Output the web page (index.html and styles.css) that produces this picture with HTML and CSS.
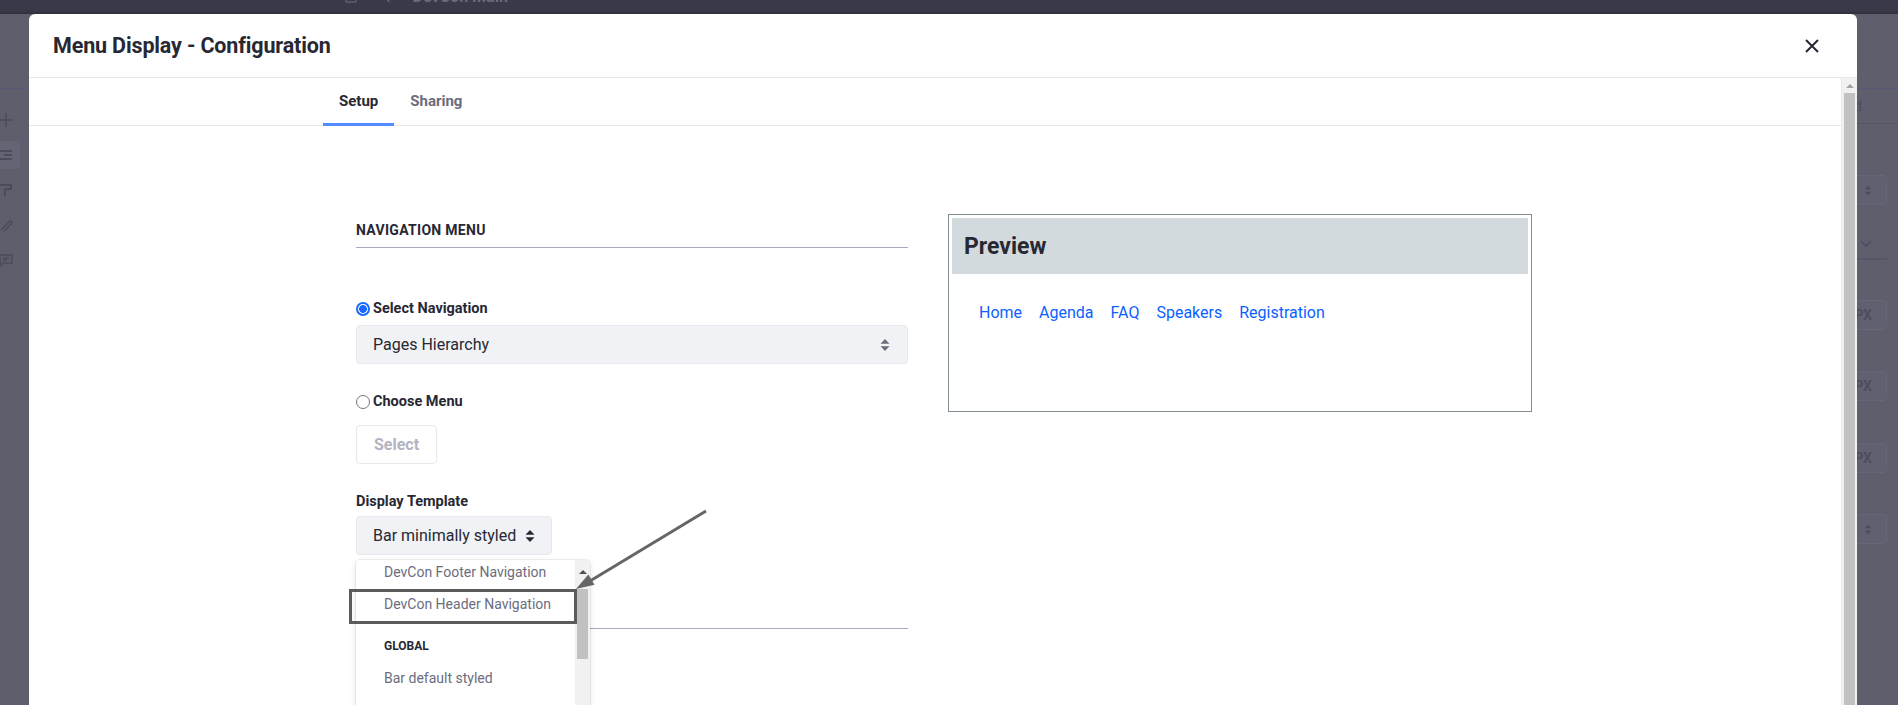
FILE: index.html
```html
<!DOCTYPE html>
<html lang="en">
<head>
<meta charset="utf-8">
<title>Menu Display - Configuration</title>
<link rel="stylesheet" href="styles.css">
</head>
<body>
<div class="topbar">
  <div class="tb-inner">
    <svg class="tb-icon" viewBox="0 0 12 14" width="12" height="14"><rect x="1" y="1" width="10" height="12" rx="1" fill="none" stroke="#5f5f70" stroke-width="1.5"/></svg>
    <span class="tb-back">&lsaquo;</span>
    <span class="tb-title">DevCon Main</span>
  </div>
</div>
<div class="backdrop">
  <aside class="bg-left">
    <div class="bg-head"></div>
    <div class="bg-icons">
      <span class="bg-ico"><svg viewBox="0 0 16 16" width="16" height="16"><path d="M8 1v14M1 8h14" stroke="#4b4b5b" stroke-width="1.5"/></svg></span>
      <span class="bg-ico on"><svg viewBox="0 0 16 16" width="16" height="16"><path d="M2 4h12M6 8h8M2 12h12" stroke="#4b4b5b" stroke-width="2"/></svg></span>
      <span class="bg-ico"><svg viewBox="0 0 16 16" width="16" height="16"><path d="M2 3h11v4H7v7" stroke="#4b4b5b" stroke-width="2" fill="none"/></svg></span>
      <span class="bg-ico"><svg viewBox="0 0 16 16" width="16" height="16"><path d="M3 13L12 4a2 2 0 0 1 2 2l-8 8" stroke="#4b4b5b" stroke-width="1.5" fill="none"/></svg></span>
      <span class="bg-ico"><svg viewBox="0 0 16 16" width="16" height="16"><path d="M2 3h12v8H6l-3 3V11H2z M5 6h6M5 8h4" stroke="#4b4b5b" stroke-width="1.3" fill="none"/></svg></span>
    </div>
  </aside>
  <main class="bg-main"></main>
  <aside class="bg-right">
    <div class="bg-head"></div>
    <div class="bg-tabrow"><span>Advanced</span></div>
    <div class="bg-box b1"><svg viewBox="0 0 10 14" width="8" height="11"><path d="M5 1L9 5.5H1z M1 8.5h8L5 13z" fill="#4b4b5b"/></svg></div>
    <div class="bg-chev"><svg viewBox="0 0 12 8" width="12" height="8"><path d="M1 1l5 5 5-5" stroke="#4b4b5b" stroke-width="1.5" fill="none"/></svg></div>
    <div class="bg-box b2"><b>PX</b></div>
    <div class="bg-box b3"><b>PX</b></div>
    <div class="bg-box b4"><b>PX</b></div>
    <div class="bg-box b5"><svg viewBox="0 0 10 14" width="8" height="11"><path d="M5 1L9 5.5H1z M1 8.5h8L5 13z" fill="#4b4b5b"/></svg></div>
  </aside>
</div>

<div class="modal">
  <header class="modal-header">
    <h1 class="modal-title">Menu Display - Configuration</h1>
    <button class="close" type="button" aria-label="Close">
      <svg viewBox="0 0 14 14" width="14" height="14"><path d="M1 1L13 13M13 1L1 13" stroke="#272833" stroke-width="2" fill="none"/></svg>
    </button>
  </header>
  <div class="modal-body">
    <div class="modal-main">
      <nav class="tabs">
        <a class="tab active">Setup</a>
        <a class="tab">Sharing</a>
      </nav>
      <div class="content">
        <div class="form-col">
          <h3 class="sheet-title">Navigation Menu</h3>
          <label class="radio-row r-first"><span class="radio checked"></span>Select Navigation</label>
          <div class="select wide">
            <span>Pages Hierarchy</span>
            <svg class="caret muted" viewBox="0 0 10 14" width="10" height="14"><path d="M5 1L9.5 5.8H0.5z M0.5 8.2h9L5 13z"/></svg>
          </div>
          <label class="radio-row r-second"><span class="radio"></span>Choose Menu</label>
          <button class="btn-select" type="button">Select</button>
          <div class="field-label">Display Template</div>
          <div class="template-field">
            <div class="select compact">
              <span>Bar minimally styled</span>
              <svg class="caret" viewBox="0 0 10 14" width="10" height="14"><path d="M5 1L9.5 5.8H0.5z M0.5 8.2h9L5 13z"/></svg>
            </div>
            <div class="dropdown">
              <ul class="dd-list">
                <li class="dd-item">DevCon Footer Navigation</li>
                <li class="dd-item">DevCon Header Navigation</li>
                <li class="dd-group">Global</li>
                <li class="dd-item">Bar default styled</li>
                <li class="dd-item">Bar minimally styled (default)</li>
                <li class="dd-item">List menu</li>
              </ul>
              <div class="dd-scroll">
                <span class="dd-up"></span>
                <span class="dd-thumb"></span>
              </div>
            </div>
          </div>
          <div class="separator"></div>
        </div>
        <section class="preview">
          <div class="preview-head"><h2>Preview</h2></div>
          <ul class="preview-nav">
            <li><a>Home</a></li>
            <li><a>Agenda</a></li>
            <li><a>FAQ</a></li>
            <li><a>Speakers</a></li>
            <li><a>Registration</a></li>
          </ul>
        </section>
      </div>
    </div>
    <div class="scrollbar">
      <span class="sb-up"></span>
      <span class="sb-thumb"></span>
    </div>
  </div>
</div>

<div class="note-box"></div>
<svg class="note-arrow" viewBox="0 0 1898 705" width="1898" height="705">
  <line x1="706" y1="511" x2="590" y2="581" stroke="#666666" stroke-width="3"/>
  <polygon points="576,589 594.5,584.8 588.3,574.6" fill="#666666"/>
</svg>
</body>
</html>
```

FILE: styles.css
```css
* { box-sizing: border-box; margin: 0; padding: 0; }
html, body { width: 1898px; height: 705px; overflow: hidden; }
body {
  background: #5e5e6d;
  font-family: Roboto, "Liberation Sans", sans-serif;
  color: #272833;
  position: relative;
}
ul { list-style: none; }
button { font-family: inherit; background: none; border: 0; }

/* ---------- background page (behind backdrop) ---------- */
.topbar {
  height: 14px;
  background: linear-gradient(#3a3a4a 0, #383848 11px, #2e2e3c 14px);
  overflow: hidden;
  padding-left: 345px;
}
.tb-inner {
  display: flex;
  align-items: center;
  height: 20px;
  margin-top: -14px;
  color: #6a6a7c;
}
.tb-icon { margin-right: 27px; }
.tb-back { font-size: 22px; margin-right: 22px; }
.tb-title { font-size: 16px; font-weight: 700; }

.backdrop { display: flex; height: 691px; }
.bg-head { height: 75px; border-bottom: 1px solid #555a7c; }
.bg-left { width: 29px; }
.bg-icons { display: flex; flex-direction: column; gap: 7px; padding-top: 17px; }
.bg-ico {
  width: 28px; height: 28px; margin-left: -8px;
  display: flex; align-items: center; justify-content: center;
  border-radius: 4px;
}
.bg-ico.on { background: #646474; }
.bg-main { flex: 1; }
.bg-right { width: 60px; padding: 0 11px 0 2px; }
.bg-right .bg-head { margin: 0 -11px 0 -2px; }
.bg-tabrow {
  height: 35px;
  margin: 0 -11px 0 -2px;
  border-bottom: 1px solid #565665;
  display: flex; justify-content: flex-end; align-items: center;
  padding-right: 36px;
  font-size: 15px; color: #4f4f60; white-space: nowrap;
}
.bg-box {
  height: 30px;
  border: 1px solid #666676;
  border-radius: 4px;
  background: #606070;
  display: flex; align-items: center; justify-content: flex-end;
  padding-right: 14px;
  color: #4d4d5d; font-size: 14px;
}
.bg-box.b1 { margin-top: 51px; }
.bg-chev {
  height: 31px; margin-top: 24px;
  border-bottom: 2px solid #565667;
  display: flex; align-items: center; justify-content: flex-end; padding-right: 15px;
}
.bg-box.b2 { margin-top: 40px; }
.bg-box.b3 { margin-top: 41px; }
.bg-box.b4 { margin-top: 42px; }
.bg-box.b5 { margin-top: 41px; }

/* ---------- modal ---------- */
.modal {
  position: absolute;
  left: 29px; top: 14px;
  width: 1828px; height: 710px;
  background: #fff;
  border-radius: 6px 6px 0 0;
  display: flex; flex-direction: column;
}
.modal-header {
  height: 64px;
  flex: none;
  border-bottom: 1px solid #e7e7ed;
  display: flex; align-items: center; justify-content: space-between;
  padding: 0 38px 0 24px;
}
.modal-title { font-size: 21.5px; font-weight: 700; color: #272833; letter-spacing: -0.15px; }
.close { width: 14px; height: 14px; display: flex; }

.modal-body { flex: 1; display: flex; min-height: 0; }
.modal-main { flex: 1; min-width: 0; }

.tabs {
  display: flex;
  height: 48px;
  border-bottom: 1px solid #e7e7ed;
  padding-left: 294px;
}
.tab {
  height: 48px;
  margin-bottom: -1px;
  padding: 0 16px 2px;
  display: flex; align-items: center;
  font-size: 15px; font-weight: 700; color: #6b6c7e;
}
.tab.active { color: #272833; box-shadow: inset 0 -3px 0 #528bff; }

.content {
  display: flex; align-items: flex-start;
  padding: 88px 0 0 327px;
}
.form-col { width: 552px; }
.sheet-title {
  font-size: 14px; font-weight: 700; text-transform: uppercase; letter-spacing: 0.3px;
  line-height: 20px;
  padding: 6px 0 7px;
  border-bottom: 1px solid #a7a9bc;
}
.radio-row {
  display: flex; align-items: center; gap: 3px;
  font-size: 14.5px; font-weight: 700; line-height: 20px;
}
.r-first { margin-top: 51px; }
.r-second { margin-top: 28px; }
.radio {
  width: 14px; height: 14px; border-radius: 50%;
  border: 1px solid #767676; background: #fff;
}
.radio.checked {
  border: 2px solid #1769ff;
  background: radial-gradient(circle, #1769ff 0 3.6px, #fff 4.2px);
}
.select {
  height: 39px;
  background: #f1f2f5;
  border: 1px solid #e7e7ed;
  border-radius: 4px;
  display: flex; align-items: center;
  padding: 0 16px;
  font-size: 16px; color: #272833;
}
.select.wide { margin-top: 6px; justify-content: space-between; padding-right: 17px; }
.select.compact { display: inline-flex; gap: 9px; padding-right: 16px; }
.caret { fill: #272833; flex: none; }
.caret.muted { fill: #6b6c7e; }

.btn-select {
  display: block;
  margin-top: 13px;
  height: 39px;
  padding: 0 17px;
  border: 1px solid #e7e7ed;
  border-radius: 4px;
  background: #fff;
  font-size: 16px; font-weight: 700; color: #b3b4bf;
}
.field-label {
  margin-top: 28px;
  font-size: 14.5px; font-weight: 700; line-height: 20px;
}
.template-field { position: relative; margin-top: 4px; height: 39px; }

.dropdown {
  position: absolute; z-index: 2;
  left: 0; top: 44px;
  width: 234px; height: 160px;
  background: #fff;
  border-radius: 4px 4px 0 0;
  box-shadow: 0 0 0 1px rgba(0,0,0,0.05), 0 2px 6px rgba(0,0,0,0.12);
  display: flex;
  overflow: hidden;
}
.dd-list { flex: 1; margin-top: -4px; }
.dd-item {
  height: 32px; line-height: 32px;
  padding-left: 28px;
  font-size: 14px; color: #6b6c7e; white-space: nowrap;
}
.dd-group {
  height: 32px; line-height: 32px; margin-top: 10px;
  padding-left: 28px;
  font-size: 12px; font-weight: 700; text-transform: uppercase; color: #272833;
}
.dd-group + .dd-item + .dd-item { padding-top: 3px; }
.dd-scroll {
  width: 15px; flex: none;
  background: #f1f1f1;
  display: flex; flex-direction: column; align-items: center;
  padding-top: 10px;
}
.dd-up {
  width: 0; height: 0;
  border-left: 4px solid transparent; border-right: 4px solid transparent;
  border-bottom: 4px solid #505050;
}
.dd-thumb { width: 11px; height: 70px; margin-top: 15px; background: #c1c1c1; }

.separator { margin-top: 73px; border-top: 1px solid #a7a9bc; }

.preview {
  margin-left: 40px;
  width: 584px; height: 198px;
  border: 1px solid #828c93;
  padding: 3px;
}
.preview-head { height: 56px; background: #d3dadd; padding-left: 12px; display: flex; align-items: center; padding-top: 1px; }
.preview-head h2 { font-size: 23px; font-weight: 700; color: #272833; }
.preview-nav {
  display: flex; gap: 17px;
  margin-top: 27px; padding-left: 27px;
  font-size: 16px; line-height: 24px;
}
.preview-nav a { color: #0b5fff; }

.scrollbar {
  width: 16px; flex: none;
  background: #f1f1f1;
  border-left: 1px solid #e8e8e8;
  display: flex; flex-direction: column; align-items: center;
  padding-top: 6px;
}
.sb-up {
  width: 0; height: 0;
  border-left: 4px solid transparent; border-right: 4px solid transparent;
  border-bottom: 4px solid #a3a3a3;
}
.sb-thumb { width: 11px; flex: 1; margin-top: 5px; background: #c1c1c1; }

/* ---------- annotation overlay ---------- */
.note-box {
  position: absolute; z-index: 5;
  left: 349px; top: 589px;
  width: 228px; height: 35px;
  border: 3px solid #5b5b5b;
}
.note-arrow { position: absolute; z-index: 6; left: 0; top: 0; pointer-events: none; }
```
